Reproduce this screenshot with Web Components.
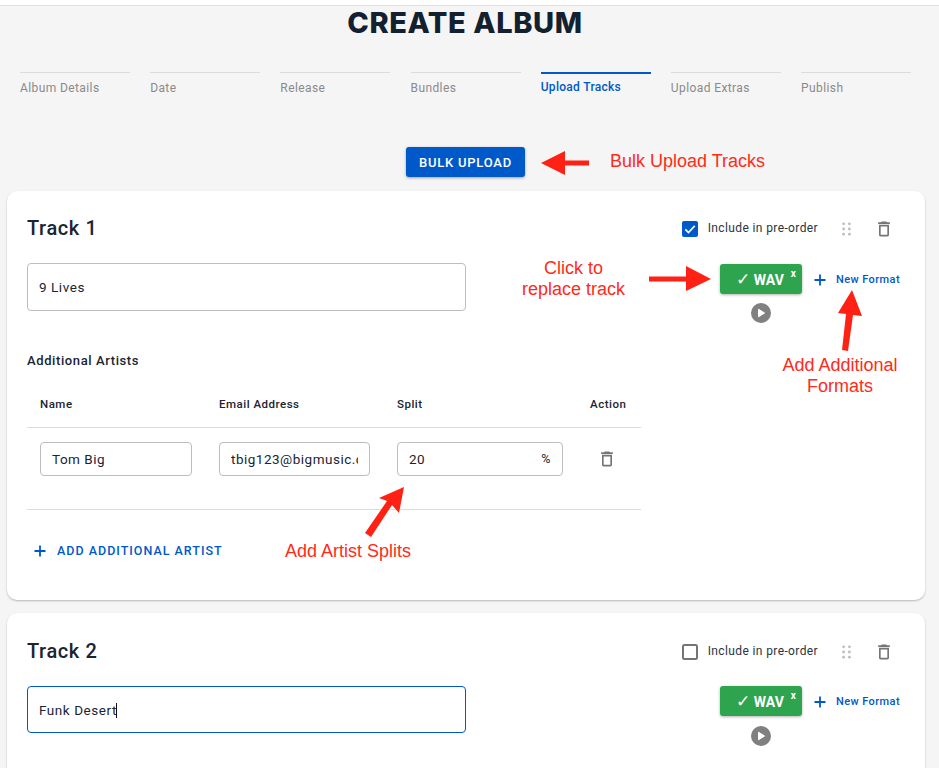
<!DOCTYPE html>
<html lang="en">
<head>
<meta charset="utf-8">
<title>Create Album</title>
<style>
  html, body { margin: 0; height: 768px; overflow: hidden; background: #f5f5f5; }
  body { font-family: "Roboto", "Liberation Sans", sans-serif; color: #1a2433; position: relative; }
</style>
</head>
<body>
<album-page>
  <album-steps>
    <step-item>Album Details</step-item>
    <step-item>Date</step-item>
    <step-item>Release</step-item>
    <step-item>Bundles</step-item>
    <step-item active>Upload Tracks</step-item>
    <step-item>Upload Extras</step-item>
    <step-item>Publish</step-item>
  </album-steps>

  <bulk-button></bulk-button>

  <track-card title="Track 1" checked>
    <text-field slot="name" large>9 Lives</text-field>
    <artist-table>
      <text-field>Tom Big</text-field>
      <text-field slot="email">tbig123@bigmusic.com</text-field>
      <text-field slot="split" suffix="%">20</text-field>
    </artist-table>
  </track-card>

  <track-card title="Track 2" second>
    <text-field slot="name" large focused>Funk Desert</text-field>
  </track-card>
</album-page>
<note-layer></note-layer>

<script>
const TRASH = `<svg width="20" height="20" viewBox="0 0 24 24" fill="#757575"><path d="M6 19c0 1.1.9 2 2 2h8c1.100 0 2-.9 2-2V7H6v12zM8 9h8v10H8V9zm7.500-5l-1-1h-5l-1 1H5v2h14V4z"/></svg>`
const PLUS = `<svg width="14" height="14" viewBox="0 0 14 14" fill="#0059c9"><path d="M6.100 1.500h1.800v4.600h4.600v1.800H7.900v4.600H6.100V7.900H1.500V6.100h4.600z"/></svg>`

class AlbumPage extends HTMLElement {
  constructor () {
    super()
    this.attachShadow({ mode: 'open' }).innerHTML = /*html*/`
      <style>
        :host { display: block; }
        .strip { height: 5px; background: #fff; border-bottom: 1px solid #e0e0e0; }
        h1 {
          margin: 0; padding-right: 9px; text-align: center;
          font: 800 29px/34px "Inter", "Liberation Sans", sans-serif;
          letter-spacing: .6px; color: #13202f;
        }
      </style>
      <div class="strip"></div>
      <h1>CREATE ALBUM</h1>
      <slot></slot>
    `
  }
}

class AlbumSteps extends HTMLElement {
  constructor () {
    super()
    this.attachShadow({ mode: 'open' }).innerHTML = /*html*/`
      <style>
        :host { display: flex; gap: 20.2px; padding: 32px 28px 0 20px; height: 43px; margin-bottom: 32px; }
      </style>
      <slot></slot>
    `
  }
}

class StepItem extends HTMLElement {
  constructor () {
    super()
    this.attachShadow({ mode: 'open' }).innerHTML = /*html*/`
      <style>
        :host {
          display: block; flex: 1; border-top: 1px solid #dcdcdc; padding-top: 8px;
          font: 400 12px/14px "Roboto", sans-serif; letter-spacing: .4px; color: #8a8a8a;
        }
        :host([active]) {
          border-top: 2px solid #0059c9; padding-top: 6px; color: #0059c9; font-weight: 500; letter-spacing: .3px;
        }
      </style>
      <slot></slot>
    `
  }
}

class BulkButton extends HTMLElement {
  constructor () {
    super()
    this.attachShadow({ mode: 'open' }).innerHTML = /*html*/`
      <style>
        :host { display: flex; justify-content: center; padding-right: 8px; margin-bottom: 14px; }
        button {
          width: 119px; height: 30px; padding: 0; border: 0; border-radius: 3px;
          background: #0059c9; color: #fff;
          font: 500 13px "Roboto", sans-serif; letter-spacing: .75px;
          box-shadow: 0 1px 3px rgba(0,0,0,.35);
        }
      </style>
      <button>BULK UPLOAD</button>
    `
  }
}

class TextField extends HTMLElement {
  constructor () {
    super()
    this.attachShadow({ mode: 'open' })
  }

  connectedCallback () {
    const suffix = this.getAttribute('suffix')
    this.shadowRoot.innerHTML = /*html*/`
      <style>
        :host {
          display: flex; align-items: center; box-sizing: border-box; height: 34px;
          padding: 0 11px; background: #fff;
          border: 1px solid #bdbdbd; border-radius: 4px;
          font: 400 13.5px/20px "Roboto", sans-serif; letter-spacing: .5px; color: #1a2433;
        }
        :host([large]) { height: 48px; width: 439px; letter-spacing: .55px; }
        :host([focused]) { height: 47px; padding-top: 1px; border-color: #0059c9; }
        .value { flex: 1; overflow: hidden; white-space: nowrap; }
        .caret { display: inline-block; width: 1px; height: 15px; background: #111; vertical-align: -3px; margin-left: -1px; }
        .suffix { font-size: 12.5px; }
      </style>
      <div class="value"><slot></slot>${this.hasAttribute('focused') ? '<span class="caret"></span>' : ''}</div>
      ${suffix ? `<span class="suffix">${suffix}</span>` : ''}
    `
  }
}

class WavButton extends HTMLElement {
  constructor () {
    super()
    this.attachShadow({ mode: 'open' }).innerHTML = /*html*/`
      <style>
        :host { display: flex; flex-direction: column; align-items: center; gap: var(--play-gap, 9px); }
        .wav {
          position: relative; box-sizing: border-box; width: 82px; height: 30px; padding-right: 2px;
          border-radius: 3px; background: #2ea44f;
          color: #fff; font: 700 14px/30px "Roboto", sans-serif;
          text-align: center; box-shadow: 0 1px 3px rgba(0,0,0,.3);
        }
        .tick { font: 700 17px/30px "DejaVu Sans", sans-serif; }
        .x { position: absolute; top: 4px; right: 6px; font: 700 10px/12px "Roboto", sans-serif; }
        svg { display: block; }
      </style>
      <div class="wav"><span class="tick">✓</span> WAV<span class="x">x</span></div>
      <svg width="20" height="20" viewBox="0 0 20 20"><circle cx="10" cy="10" r="10" fill="#808080"/><path d="M7.500 6.200v7.600L13.600 10z" fill="#fff" stroke="#fff" stroke-linejoin="round"/></svg>
    `
  }
}

class ArtistTable extends HTMLElement {
  constructor () {
    super()
    this.attachShadow({ mode: 'open' }).innerHTML = /*html*/`
      <style>
        :host { display: block; width: 614px; margin-top: 28px; }
        h3 { margin: 0; font: 500 13px/20px "Roboto", sans-serif; letter-spacing: .6px; }
        .row { display: grid; grid-template-columns: 152px 151px 166px 1fr; column-gap: 27px; padding-left: 13px; }
        .head {
          height: 57px; align-items: end; padding-bottom: 13px; box-sizing: border-box;
          border-bottom: 1px solid #dcdcdc;
          font: 500 11.5px/20px "Roboto", sans-serif; letter-spacing: .5px;
        }
        .body { height: 82px; box-sizing: border-box; padding-top: 14px; border-bottom: 1px solid #dcdcdc; }
        .action { display: flex; padding: 7px 0 0 7px; }
        .add {
          display: flex; align-items: center; gap: 10px; margin-top: 31px; padding-left: 6px;
          color: #0059c9; font: 500 12.5px/20px "Roboto", sans-serif; letter-spacing: 1px;
        }
      </style>
      <h3>Additional Artists</h3>
      <div class="row head"><span>Name</span><span>Email Address</span><span>Split</span><span>Action</span></div>
      <div class="row body">
        <slot></slot>
        <slot name="email"></slot>
        <slot name="split"></slot>
        <div class="action">${TRASH}</div>
      </div>
      <div class="add">${PLUS}<span>ADD ADDITIONAL ARTIST</span></div>
    `
  }
}

class TrackCard extends HTMLElement {
  constructor () {
    super()
    this.attachShadow({ mode: 'open' })
  }

  connectedCallback () {
    const checked = this.hasAttribute('checked')
    const box = checked
      ? `<svg width="18" height="18" viewBox="0 0 18 18"><rect x="1" y="1" width="16" height="16" rx="2" fill="#0059c9"/><path d="M4.300 9.300l3.200 3.200 6.200-6.600" fill="none" stroke="#fff" stroke-width="1.700"/></svg>`
      : `<svg width="18" height="18" viewBox="0 0 18 18"><rect x="2" y="2" width="14" height="14" rx="1.500" fill="none" stroke="#757575" stroke-width="2"/></svg>`
    this.shadowRoot.innerHTML = /*html*/`
      <style>
        :host {
          display: block; box-sizing: border-box; background: #fff; border-radius: 10px;
          margin: 0 14px 13px 7px; padding: 20px 20px 39px;
          box-shadow: 0 1px 2px rgba(0,0,0,.25);
        }
        :host([second]) { padding-top: 21px; height: 300px; --play-gap: 10px; }
        .top { display: flex; align-items: center; height: 34px; margin-bottom: 18px; }
        h2 { margin: 0; font: 500 20px/34px "Roboto", sans-serif; letter-spacing: .6px; color: #1a2433; }
        .tools { display: flex; align-items: center; margin-left: auto; padding: 2px 11px 0 0; }
        .tools svg { display: block; }
        .pre { margin: -2px 24px 0 9px; font: 400 12px/18px "Roboto", sans-serif; letter-spacing: .38px; color: #2a3442; }
        .drag { margin-right: 23px; }
        .track { display: flex; align-items: flex-start; height: 60px; }
        .formats { display: flex; align-items: flex-start; margin: 1px 0 0 auto; padding-right: 5px; }
        :host([second]) .formats { margin-top: 0; }
        .new {
          display: flex; align-items: center; gap: 9px; height: 30px; margin: 1px 0 0 11px;
          color: #0059c9; font: 500 11px/14px "Roboto", sans-serif; letter-spacing: .42px;
        }
      </style>
      <div class="top">
        <h2>${this.getAttribute('title')}</h2>
        <div class="tools">
          ${box}
          <span class="pre">Include in pre-order</span>
          <svg class="drag" width="9" height="14" viewBox="0 0 9 14" fill="#bdbdbd">
            <circle cx="1.600" cy="1.800" r="1.400"/><circle cx="7.400" cy="1.800" r="1.400"/>
            <circle cx="1.600" cy="7" r="1.400"/><circle cx="7.400" cy="7" r="1.400"/>
            <circle cx="1.600" cy="12.200" r="1.400"/><circle cx="7.400" cy="12.200" r="1.400"/>
          </svg>
          ${TRASH}
        </div>
      </div>
      <div class="track">
        <slot name="name"></slot>
        <div class="formats">
          <wav-button></wav-button>
          <div class="new">${PLUS}<span>New Format</span></div>
        </div>
      </div>
      <slot></slot>
    `
  }
}

// red annotations drawn over the screenshot
class NoteLayer extends HTMLElement {
  constructor () {
    super()
    this.attachShadow({ mode: 'open' }).innerHTML = /*html*/`
      <style>
        :host { position: absolute; inset: 0; pointer-events: none; }
        svg { position: absolute; left: 0; top: 0; }
        div {
          position: absolute; transform: translateX(-50%); white-space: nowrap; text-align: center;
          font: 400 18px/21px "Liberation Sans", Arial, sans-serif; color: #ff2a1a;
        }
      </style>
      <svg width="939" height="768" fill="#ff2113">
        <path d="M541 163L565 151V160.500H589V165.500H565V175Z"/>
        <path d="M649 276.500H686V266L711 279L686 291V281.500H649Z"/>
        <path d="M852 290L862 316L853 315L848 351L842 350L846 314L838 313Z"/>
        <path d="M404 487L399 513L392 505L371 537L365 533L387 501L379 498Z"/>
      </svg>
      <div style="left:687.500px;top:151px">Bulk Upload Tracks</div>
      <div style="left:573.500px;top:258px">Click to<br>replace track</div>
      <div style="left:840px;top:355px">Add Additional<br>Formats</div>
      <div style="left:348px;top:541px">Add Artist Splits</div>
    `
  }
}

customElements.define('album-page', AlbumPage)
customElements.define('album-steps', AlbumSteps)
customElements.define('step-item', StepItem)
customElements.define('bulk-button', BulkButton)
customElements.define('text-field', TextField)
customElements.define('wav-button', WavButton)
customElements.define('artist-table', ArtistTable)
customElements.define('track-card', TrackCard)
customElements.define('note-layer', NoteLayer)
</script>
</body>
</html>
